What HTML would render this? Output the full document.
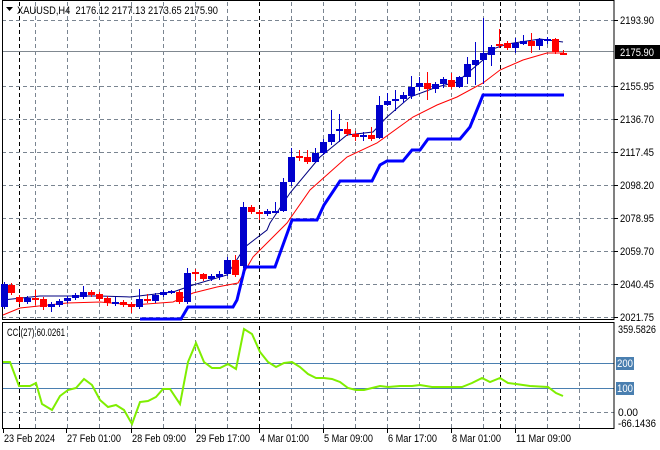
<!DOCTYPE html>
<html><head><meta charset="utf-8"><style>
html,body{margin:0;padding:0;background:#fff;width:660px;height:450px;overflow:hidden}
svg{display:block}
text{font-family:"Liberation Sans",sans-serif;font-size:11px;fill:#000}
</style></head><body>
<svg id="s" width="660" height="450" xmlns="http://www.w3.org/2000/svg"></svg>
<script>
var s=document.getElementById('s'),h='';
function L(x1,y1,x2,y2,c,w,d){h+='<line x1="'+x1+'" y1="'+y1+'" x2="'+x2+'" y2="'+y2+'" stroke="'+c+'" stroke-width="'+(w||1)+'"'+(d?' stroke-dasharray="'+d+'"':'')+'/>';}
function P(pts,c,w){h+='<polyline fill="none" stroke="'+c+'" stroke-width="'+w+'" points="'+pts.map(function(p){return p.join(',')}).join(' ')+'"/>';}
function T(x,y,t,len,extra){h+='<text x="'+x+'" y="'+y+'" textLength="'+len+'" lengthAdjust="spacingAndGlyphs" '+(extra||'')+'>'+t+'</text>';}
var gx=[35.5,67.5,99.5,131.5,163.5,195.5,227.5,291.5,323.5,355.5,387.5,419.5,451.5,483.5,515.5,547.5,579.5];
gx.forEach(function(x){L(x,2,x,319,'#7a8591',1,'4,3');L(x,326,x,428,'#7a8591',1,'4,3');});
[19.5,259.5,500.5].forEach(function(x){L(x,2,x,319,'#000',1,'4,3');L(x,326,x,428,'#000',1,'4,3');});
[20,86,119,152,185,218,251,284,317].forEach(function(y){L(2,y+.5,614,y+.5,'#7a8591',1,'4,3');});
L(2,51.5,614,51.5,'#808890',1);
L(2,412.5,614,412.5,'#7a8591',1,'4,3');
L(2,363.5,614,363.5,'#4a7fb0',1);L(2,388.5,614,388.5,'#4a7fb0',1);
h+='<rect x="2.5" y="0.5" width="611.5" height="319" fill="none" stroke="#000"/>';
h+='<rect x="2.5" y="322.5" width="611.5" height="106" fill="none" stroke="#000"/>';
P([[3,315],[20,308],[67,303],[100,302],[133,305],[173,302],[193,293],[217,287],[238,283],[253,257],[270,240],[287,223],[310,190],[347,157],[377,143],[413,117],[437,105],[457,97],[483,83],[500,70],[523,60],[547,53],[563,53]],'#ff0000',1);
P([[3,300],[40,296],[100,296],[130,297],[173,292],[193,285],[227,275],[245,247],[267,230],[270,223],[290,193],[320,157],[347,135],[373,132],[387,117],[410,97],[437,87],[457,82],[483,60],[490,50],[507,44],[540,39],[563,42]],'#000080',1);
P([[140,319],[181,319],[188,307],[233,307],[237,300],[245,267],[275,267],[292,220],[317,220],[324,205],[340,181],[372,181],[380,165],[387,161],[403,161],[412,150],[420,150],[428,139],[460,139],[470,127],[483,95],[564,95]],'#0000ff',3);
var C=[[4,307,284,282,309],[11,285,293,283,295],[19,297,302,295,304],[27,302,298,296,304],[35,298,300,290,305],[43,299,307,297,310],[51,307,304,302,312],[59,305,301,299,307],[67,301,298,296,303],[75,298,295,293,300],[83,297,292,286,299],[91,292,295,290,297],[99,294,299,292,301],[107,298,303,296,306],[115,304,302,297,306],[123,302,305,300,307],[131,304,307,302,313],[139,307,299,289,309],[147,299,301,294,303],[155,301,295,293,303],[163,295,292,290,297],[171,292,291,290,294],[179,292,302,290,304],[187,302,273,268,304],[195,272,274,269,281],[203,274,279,273,281],[211,279,276,274,281],[219,277,274,271,280],[227,274,260,257,276],[235,260,275,255,277],[243,266,207,202,268],[251,207,212,205,214],[259,212,214,210,220],[267,214,211,209,216],[275,211,211,202,213],[283,211,182,178,212],[291,182,157,148,186],[299,156,157,150,161],[307,157,162,150,164],[315,162,153,148,163],[323,153,142,139,155],[331,142,134,110,145],[339,129,129,114,142],[347,129,134,122,136],[355,134,137,131,141],[363,137,135,132,141],[371,135,139,127,141],[379,138,105,96,139],[387,105,101,93,106],[395,101,99,90,111],[403,99,95,92,103],[411,96,87,76,99],[419,87,83,77,91],[427,83,89,72,100],[435,89,84,82,93],[443,84,79,77,88],[451,80,87,73,89],[459,87,77,76,88],[467,77,64,57,84],[475,65,60,42,85],[483,60,53,18,84],[491,55,47,45,66],[499,44,44,29,48],[507,43,48,41,50],[515,48,43,38,53],[523,44,41,35,45],[531,41,46,33,53],[539,46,39,38,50],[547,39,39,37,44],[555,39,52,38,54],[563,53,53,50,55]];
C.forEach(function(c){var col=(c[2]>c[1])?'#ff0000':'#0000cc';
 if([35,91,147,195,251,259,299,347,355,371,427,451,499,507,531,555,563].indexOf(c[0])>=0)col='#ff0000';
 L(c[0]+.5,c[3],c[0]+.5,c[4],col,1);
 var t=Math.min(c[1],c[2]),b=Math.max(c[1],c[2]);if(b-t<2){b=t+2;}
 h+='<rect x="'+(c[0]-3)+'" y="'+t+'" width="7" height="'+(b-t)+'" fill="'+col+'"/>';});
P([[3,362],[10,362],[19,386],[30,386],[36,383],[42,404],[52,410],[60,396],[68,390],[76,388],[84,379],[92,385],[100,400],[108,407],[116,405],[124,410],[132,424],[140,402],[148,401],[156,397],[163,389],[170,389],[180,404],[188,362],[196,343],[204,362],[212,368],[220,368],[228,364],[236,369],[244,329],[252,334],[260,352],[268,362],[276,367],[284,363],[292,362],[300,367],[308,374],[316,378],[324,378],[332,379],[340,382],[348,388],[356,390],[364,390],[372,388],[380,386],[388,387],[400,386],[412,386],[420,385],[432,387],[448,387],[462,387],[472,383],[482,378],[490,382],[500,378],[508,383],[516,384],[530,386],[548,387],[556,393],[563,396]],'#7fee00',2);
h+='<polygon points="6,7 13,7 9.5,11" fill="#000"/>';
T(17,14,'XAUUSD,H4&#160;&#160;2176.12 2177.13 2173.65 2175.90',201);
T(7,336,'CCI(27) 60.0261',58);
[['2193.90',20],['2155.95',86],['2136.70',119],['2117.45',152],['2098.20',185],['2078.95',218],['2059.70',251],['2040.45',284],['2021.75',317]].forEach(function(a){L(614,a[1]+.5,618,a[1]+.5,'#000');T(620,a[1]+4,a[0],34);});
h+='<rect x="615" y="45" width="45" height="14" fill="#000"/>';
T(620,56,'2175.90',34,'style="fill:#fff"');
T(618,333,'359.5826',38);
h+='<rect x="616" y="357" width="18" height="13" fill="#4a7fb0"/>';T(617,367,'200',16,'style="fill:#fff"');
h+='<rect x="616" y="382" width="18" height="13" fill="#4a7fb0"/>';T(617,392,'100',16,'style="fill:#fff"');
T(618,416,'0.00',20);T(618,427,'-66.1436',38);
[['23 Feb 2024',3,51],['27 Feb 01:00',66,54],['28 Feb 09:00',131,54],['29 Feb 17:00',195,54],['4 Mar 01:00',259,49],['5 Mar 09:00',323,49],['6 Mar 17:00',387,49],['8 Mar 01:00',451,49],['11 Mar 09:00',515,55]].forEach(function(a){L(a[1]+.5,429,a[1]+.5,433,'#000');T(a[1]+1,442,a[0],a[2]);});
s.innerHTML=h;
</script>
</body></html>
